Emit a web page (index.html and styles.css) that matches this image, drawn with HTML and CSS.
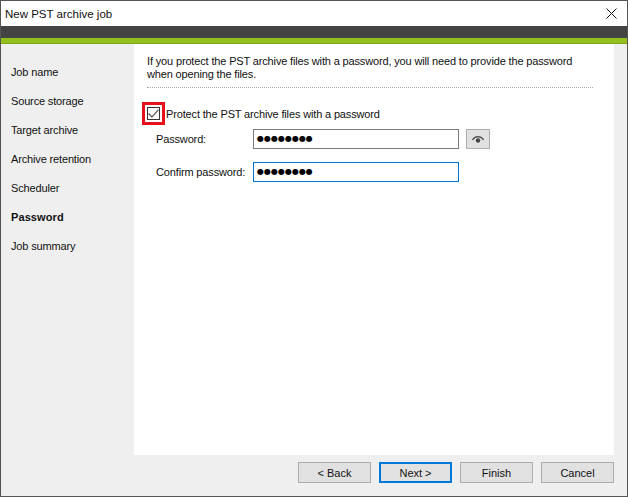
FILE: index.html
```html
<!DOCTYPE html>
<html lang="en">
<head>
<meta charset="utf-8">
<title>New PST archive job</title>
<link rel="stylesheet" href="styles.css">
</head>
<body>
<div class="window">
  <header class="titlebar">
    <span class="title">New PST archive job</span>
    <button class="close" aria-label="Close">
      <svg width="11" height="11" viewBox="0 0 11 11"><path d="M0.5 0.5L10.5 10.5M10.5 0.5L0.5 10.5" stroke="#111" stroke-width="1" fill="none"/></svg>
    </button>
  </header>
  <div class="band-dark"></div>
  <div class="band-green"></div>
  <div class="main">
    <nav class="sidebar">
      <div class="nav-item">Job name</div>
      <div class="nav-item">Source storage</div>
      <div class="nav-item">Target archive</div>
      <div class="nav-item">Archive retention</div>
      <div class="nav-item">Scheduler</div>
      <div class="nav-item active">Password</div>
      <div class="nav-item">Job summary</div>
    </nav>
    <section class="content">
      <p class="intro">If you protect the PST archive files with a password, you will need to provide the password<br>when opening the files.</p>
      <div class="divider"></div>
      <div class="check-row">
        <span class="highlight">
          <span class="checkbox">
            <svg width="11" height="9" viewBox="0 0 11 9"><path d="M0.5 4.5L4 8L10.5 0.7" stroke="#555" stroke-width="1.2" fill="none"/></svg>
          </span>
        </span>
        <span class="check-label">Protect the PST archive files with a password</span>
      </div>
      <div class="field-row first">
        <label class="field-label">Password:</label>
        <div class="input">●●●●●●●●</div>
        <button class="eye" aria-label="Show password">
          <svg width="14" height="10" viewBox="0 0 14 10"><path d="M1.5 6C3.5 1.5 10.5 1.5 12.5 6" stroke="#555" stroke-width="1.5" fill="none"/><circle cx="7" cy="6.5" r="2.2" fill="#444"/></svg>
        </button>
      </div>
      <div class="field-row second">
        <label class="field-label">Confirm password:</label>
        <div class="input focus">●●●●●●●●</div>
      </div>
    </section>
  </div>
  <footer class="footer">
    <button class="btn">&lt; Back</button>
    <button class="btn default">Next &gt;</button>
    <button class="btn">Finish</button>
    <button class="btn">Cancel</button>
  </footer>
</div>
</body>
</html>
```
FILE: styles.css
```css
* { box-sizing: border-box; }
html, body { margin: 0; padding: 0; }
body {
  width: 628px;
  height: 497px;
  overflow: hidden;
  font-family: "Liberation Sans", Arial, sans-serif;
  font-size: 11px;
  letter-spacing: -0.15px;
  color: #111;
  background: #efefef;
}
.window {
  width: 628px;
  height: 497px;
  border: 1px solid #555;
  display: flex;
  flex-direction: column;
  background: #efefef;
}
.titlebar {
  height: 25px;
  flex: none;
  background: #fff;
  display: flex;
  align-items: center;
  justify-content: space-between;
  padding: 0 10px 0 4px;
}
.title { font-size: 11.5px; letter-spacing: 0; }
.close {
  border: 0;
  background: none;
  padding: 0;
  width: 11px;
  height: 11px;
  display: flex;
}
.band-dark { height: 12px; flex: none; background: #444; }
.band-green {
  height: 6px;
  flex: none;
  background: #93c01f;
  border-bottom: 1px solid #7fa51a;
}
.main { height: 411px; flex: none; display: flex; }
.sidebar {
  width: 133px;
  flex: none;
  padding-top: 20px;
  padding-left: 10px;
  display: flex;
  flex-direction: column;
  gap: 13px;
}
.nav-item { height: 16px; line-height: 16px; white-space: nowrap; }
.nav-item.active { font-weight: 700; letter-spacing: 0.1px; }
.content {
  width: 480px;
  flex: none;
  background: #fff;
  padding: 11px 0 0 13px;
}
.intro { margin: 0; line-height: 13px; white-space: nowrap; }
.divider {
  width: 446px;
  margin-top: 6px;
  border-top: 1px dotted #aaa;
}
.check-row { display: flex; align-items: center; margin-top: 14px; margin-left: -5px; }
.highlight {
  width: 23px;
  height: 23px;
  border: 3px solid #e8101c;
  display: flex;
  align-items: center;
  justify-content: center;
  flex: none;
}
.checkbox {
  width: 13px;
  height: 13px;
  border: 1px solid #333;
  display: flex;
  align-items: center;
  justify-content: center;
  background: #fff;
}
.check-label { margin-left: 1px; white-space: nowrap; }
.field-row { display: flex; align-items: center; }
.field-row.first { margin-top: 4px; }
.field-row.second { margin-top: 13px; }
.field-label { width: 106px; padding-left: 9px; white-space: nowrap; }
.input {
  width: 206px;
  height: 20px;
  border: 1px solid #7a7a7a;
  background: #fff;
  font-family: "DejaVu Sans", sans-serif;
  font-size: 8px;
  letter-spacing: 0;
  line-height: 18px;
  padding-left: 3px;
  color: #000;
  white-space: nowrap;
}
.input.focus { border-color: #0078d7; }
.eye {
  width: 24px;
  height: 20px;
  margin-left: 7px;
  border: 1px solid #adadad;
  background: #e1e1e1;
  padding: 0;
  display: flex;
  align-items: center;
  justify-content: center;
}
.footer {
  flex: 1;
  display: flex;
  justify-content: flex-end;
  gap: 8px;
  padding: 7px 13px 0 0;
}
.btn {
  width: 73px;
  height: 21px;
  border: 1px solid #adadad;
  background: #e1e1e1;
  font: inherit;
  color: #111;
  padding: 0;
}
.btn.default { border: 2px solid #0078d7; }
```
